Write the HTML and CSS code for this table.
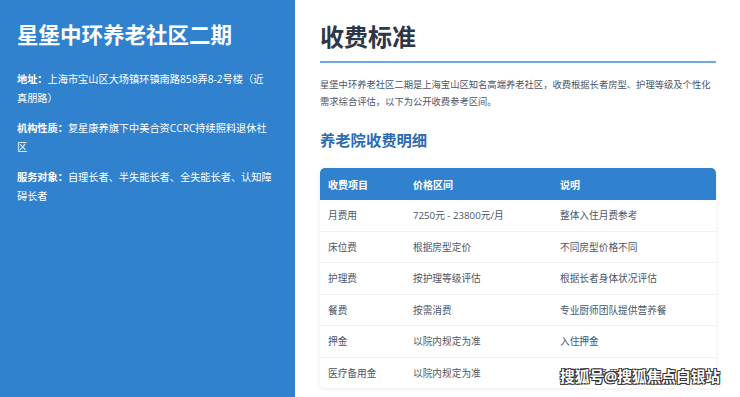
FILE: index.html
```html
<!DOCTYPE html>
<html>
<head>
    <meta charset="utf-8">
    <title>星堡中环养老社区二期 - 收费标准</title>
    <link rel="stylesheet" href="styles.css">
</head>
<body>
    <div class="page">
        <aside class="sidebar">
            <h1 class="sidebar-title">星堡中环养老社区二期</h1>
            <p class="info"><b>地址：</b>上海市宝山区大场镇环镇南路858弄8-2号楼（近真朋路）</p>
            <p class="info"><b>机构性质：</b>复星康养旗下中美合资CCRC持续照料退休社区</p>
            <p class="info"><b>服务对象：</b>自理长者、半失能长者、全失能长者、认知障碍长者</p>
        </aside>

        <main class="content">
            <h2 class="main-title">收费标准</h2>
            <p class="intro">星堡中环养老社区二期是上海宝山区知名高端养老社区，收费根据长者房型、护理等级及个性化需求综合评估，以下为公开收费参考区间。</p>

            <h3 class="sub-title">养老院收费明细</h3>
            <table class="fee-table">
                <thead>
                    <tr>
                        <th class="col-item">收费项目</th>
                        <th class="col-price">价格区间</th>
                        <th>说明</th>
                    </tr>
                </thead>
                <tbody>
                    <tr><td>月费用</td><td>7250元 - 23800元/月</td><td>整体入住月费参考</td></tr>
                    <tr><td>床位费</td><td>根据房型定价</td><td>不同房型价格不同</td></tr>
                    <tr><td>护理费</td><td>按护理等级评估</td><td>根据长者身体状况评估</td></tr>
                    <tr><td>餐费</td><td>按需消费</td><td>专业厨师团队提供营养餐</td></tr>
                    <tr><td>押金</td><td>以院内规定为准</td><td>入住押金</td></tr>
                    <tr><td>医疗备用金</td><td>以院内规定为准</td><td>应急医疗备用</td></tr>
                </tbody>
            </table>
        </main>
    </div>
    <div class="watermark">搜狐号@搜狐焦点白银站</div>
</body>
</html>
```

FILE: styles.css
```css
body {
    margin: 0;
    padding: 0;
    font-family: "Open Sans", "Noto Sans CJK SC", sans-serif;
    background-color: #ffffff;
    overflow: hidden;
}

.page {
    display: flex;
    height: 397px;
}

.sidebar {
    width: 295px;
    flex-shrink: 0;
    box-sizing: border-box;
    padding: 20px 22px 0 17px;
    background-color: #3182ce;
    color: white;
}

.sidebar-title {
    margin: 0 0 20px 0;
    font-size: 21.5px;
    line-height: 30px;
    font-weight: bold;
}

.info {
    margin: 0 0 12px 0;
    font-size: 10.2px;
    line-height: 18.5px;
}

.info b {
    font-weight: bold;
}

.content {
    flex: 1;
    padding: 0 24px 0 25px;
}

.main-title {
    margin: 20px 0 0 0;
    padding-bottom: 7px;
    font-size: 24px;
    line-height: 34px;
    font-weight: bold;
    color: #2d3748;
    border-bottom: 2px solid #6ea8e0;
}

.intro {
    margin: 14px 0 0 0;
    font-size: 9.3px;
    line-height: 16.5px;
    color: #4a5568;
}

.sub-title {
    margin: 19px 0 0 0;
    font-size: 15.3px;
    line-height: 22px;
    font-weight: bold;
    color: #2b6cb0;
}

.fee-table {
    width: 100%;
    margin-top: 17px;
    border-collapse: separate;
    border-spacing: 0;
    border-radius: 5px;
    overflow: hidden;
    box-shadow: 0 1px 4px rgba(0, 0, 0, 0.08);
    table-layout: fixed;
}

.fee-table th {
    height: 32px;
    padding: 0 8px;
    text-align: left;
    font-size: 10px;
    font-weight: bold;
    color: white;
    background-color: #3182ce;
}

.fee-table .col-item {
    width: 69px;
}

.fee-table .col-price {
    width: 131px;
}

.fee-table td {
    height: 30.5px;
    padding: 0 8px;
    font-size: 9.7px;
    color: #4a5568;
    border-bottom: 1px solid #edf2f7;
}

.fee-table tbody tr:last-child td {
    border-bottom: none;
}

.watermark {
    position: absolute;
    left: 560px;
    top: 364px;
    font-size: 14.7px;
    line-height: 24px;
    font-weight: bold;
    color: white;
    text-shadow: -1px -1px 0 #333, 1px -1px 0 #333, -1px 1px 0 #333, 1px 1px 0 #333;
}
```
